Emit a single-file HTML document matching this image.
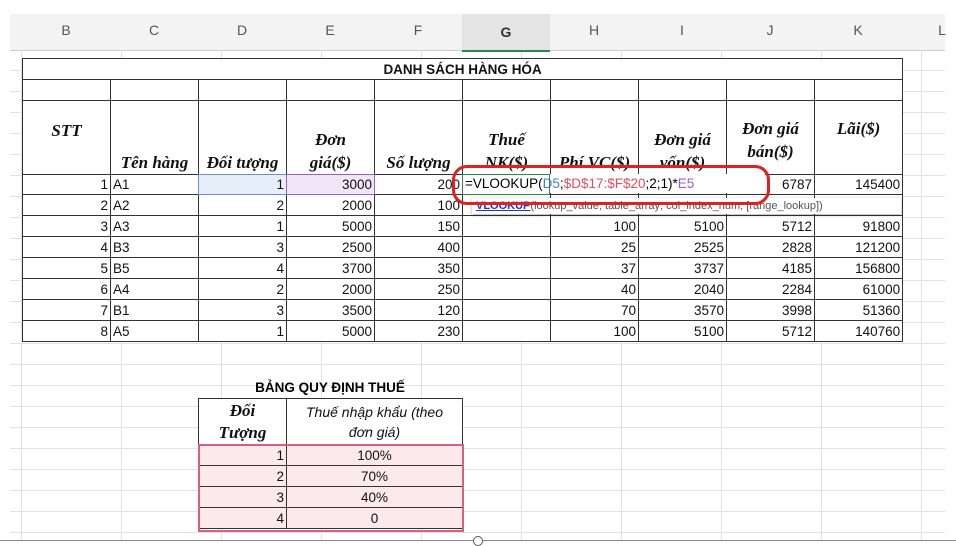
<!DOCTYPE html>
<html><head><meta charset="utf-8"><style>
body{margin:0;width:956px;height:546px;background:#fff;position:relative;overflow:hidden;font-family:"Liberation Sans",sans-serif}
.a{position:absolute}
#grid{left:10px;top:50px;width:935px;height:490px;
background-image:repeating-linear-gradient(to bottom,transparent 0,transparent 20px,#e2e2e2 20px,#e2e2e2 21px),
repeating-linear-gradient(to right,transparent 0,transparent 11px,#e2e2e2 11px,#e2e2e2 12px,transparent 12px,transparent 100px);}
#hdr{left:10px;top:14px;width:935px;height:36px;background:#f3f3f3;border-bottom:1px solid #ccc}
.ch{position:absolute;top:22px;width:88px;text-align:center;font-size:14px;color:#555}
table{border-collapse:collapse;position:absolute;table-layout:fixed}
td{border:1.5px solid #333;padding:0 2px;font-size:13.5px;color:#111;overflow:hidden;white-space:nowrap;background:#fff}
.h td{font-family:"Liberation Serif",serif;font-style:italic;font-weight:bold;font-size:17px;text-align:center;vertical-align:bottom;line-height:23px}
.r{text-align:right}
</style></head><body>
<div id="hdr" class="a"></div>
<div id="grid" class="a"></div>
<div class="ch" style="left:22px">B</div><div class="ch" style="left:110px">C</div><div class="ch" style="left:198px">D</div><div class="ch" style="left:286px">E</div><div class="ch" style="left:374px">F</div><div class="ch" style="left:462px;font-weight:bold;color:#333;background:#e4e4e4;top:14px;height:36px;line-height:36px;border-bottom:2px solid #2a8a4a">G</div><div class="ch" style="left:550px">H</div><div class="ch" style="left:638px">I</div><div class="ch" style="left:726px">J</div><div class="ch" style="left:814px">K</div><div class="ch" style="left:902px;width:80px">L</div>

<table style="left:22px;top:58px;width:880px">
<colgroup><col style="width:88px"><col style="width:88px"><col style="width:88px"><col style="width:88px"><col style="width:88px"><col style="width:88px"><col style="width:88px"><col style="width:88px"><col style="width:88px"><col style="width:88px"></colgroup>
<tr style="height:21px"><td colspan="10" style="text-align:center;font-weight:bold;font-size:13.5px">DANH SÁCH HÀNG HÓA</td></tr>
<tr style="height:21px"><td></td><td></td><td></td><td></td><td></td><td></td><td></td><td></td><td></td><td></td></tr>
<tr class="h" style="height:74px"><td style="vertical-align:top;padding-top:18px">STT</td><td>Tên hàng</td><td>Đối tượng</td><td>Đơn<br>giá($)</td><td>Số lượng</td><td>Thuế<br>NK($)</td><td>Phí VC($)</td><td>Đơn giá<br>vốn($)</td><td style="vertical-align:top;padding-top:16px">Đơn giá<br>bán($)</td><td style="vertical-align:top;padding-top:16px">Lãi($)</td></tr>
<tr style="height:20px"><td class="r">1</td><td>A1</td><td class="r" style="background:#e6eefa">1</td><td class="r" style="background:#f1e6f6">3000</td><td class="r">200</td><td></td><td></td><td></td><td class="r">6787</td><td class="r">145400</td></tr>
<tr style="height:21px"><td class="r">2</td><td>A2</td><td class="r">2</td><td class="r">2000</td><td class="r">100</td><td></td><td></td><td></td><td></td><td class="r">700</td></tr>
<tr style="height:21px"><td class="r">3</td><td>A3</td><td class="r">1</td><td class="r">5000</td><td class="r">150</td><td></td><td class="r">100</td><td class="r">5100</td><td class="r">5712</td><td class="r">91800</td></tr>
<tr style="height:21px"><td class="r">4</td><td>B3</td><td class="r">3</td><td class="r">2500</td><td class="r">400</td><td></td><td class="r">25</td><td class="r">2525</td><td class="r">2828</td><td class="r">121200</td></tr>
<tr style="height:21px"><td class="r">5</td><td>B5</td><td class="r">4</td><td class="r">3700</td><td class="r">350</td><td></td><td class="r">37</td><td class="r">3737</td><td class="r">4185</td><td class="r">156800</td></tr>
<tr style="height:21px"><td class="r">6</td><td>A4</td><td class="r">2</td><td class="r">2000</td><td class="r">250</td><td></td><td class="r">40</td><td class="r">2040</td><td class="r">2284</td><td class="r">61000</td></tr>
<tr style="height:21px"><td class="r">7</td><td>B1</td><td class="r">3</td><td class="r">3500</td><td class="r">120</td><td></td><td class="r">70</td><td class="r">3570</td><td class="r">3998</td><td class="r">51360</td></tr>
<tr style="height:21px"><td class="r">8</td><td>A5</td><td class="r">1</td><td class="r">5000</td><td class="r">230</td><td></td><td class="r">100</td><td class="r">5100</td><td class="r">5712</td><td class="r">140760</td></tr>
</table>

<div class="a" style="left:198px;top:174px;width:87px;height:19px;border:1.5px solid #6a8fd8"></div>
<div class="a" style="left:286px;top:174px;width:87px;height:19px;border:1.5px solid #9b5fc8"></div>
<div class="a" style="left:462px;top:174px;width:300px;height:19px;background:#fff;font-size:13.5px;line-height:19px;white-space:nowrap;border-left:1.5px solid #2a8a4a;padding-left:2px;z-index:5">=VLOOKUP(<span style="color:#4a7fd0">D5</span>;<span style="color:#e05060">$D$17:$F$20</span>;2;1)*<span style="color:#9b5fc8">E5</span></div>
<div class="a" style="left:462px;top:174px;width:86px;height:19px;border:1.5px solid #2a8a4a;z-index:6"></div>
<div class="a" style="left:472px;top:198px;width:425px;height:16px;background:#fff;box-shadow:0 1px 3px rgba(0,0,0,.35);font-size:11px;line-height:16px;color:#555;white-space:nowrap;padding-left:4px;z-index:7"><span style="color:#2233cc;font-weight:bold;text-decoration:underline">VLOOKUP</span>(lookup_value; table_array; col_index_num; [range_lookup])</div>
<div class="a" style="left:452px;top:165px;width:312px;height:34px;border:3px solid #dd2222;border-radius:15px;z-index:10"></div>

<div class="a" style="left:198px;top:380px;width:264px;text-align:center;font-weight:bold;font-size:13.5px">BẢNG QUY ĐỊNH THUẾ</div>
<table style="left:198px;top:398px;width:264px">
<colgroup><col style="width:88px"><col style="width:176px"></colgroup>
<tr style="height:46px"><td style="font-family:'Liberation Serif',serif;font-style:italic;font-weight:bold;font-size:17px;text-align:center;line-height:22px">Đối<br>Tượng</td><td style="font-style:italic;font-size:14px;text-align:center;line-height:20px">Thuế nhập khẩu (theo<br>đơn giá)</td></tr>
<tr style="height:21px"><td class="r" style="background:#fbe9ec">1</td><td style="text-align:center;background:#fbe9ec">100%</td></tr>
<tr style="height:21px"><td class="r" style="background:#fbe9ec">2</td><td style="text-align:center;background:#fbe9ec">70%</td></tr>
<tr style="height:21px"><td class="r" style="background:#fbe9ec">3</td><td style="text-align:center;background:#fbe9ec">40%</td></tr>
<tr style="height:21px"><td class="r" style="background:#fbe9ec">4</td><td style="text-align:center;background:#fbe9ec">0</td></tr>
</table>
<div class="a" style="left:198px;top:444px;width:262px;height:84px;border:2px solid #d9607a"></div>
<div class="a" style="left:0;top:540px;width:956px;height:1px;background:#888"></div>
<div class="a" style="left:473px;top:536px;width:8px;height:8px;border:1px solid #555;border-radius:50%;background:#fff"></div>
</body></html>
